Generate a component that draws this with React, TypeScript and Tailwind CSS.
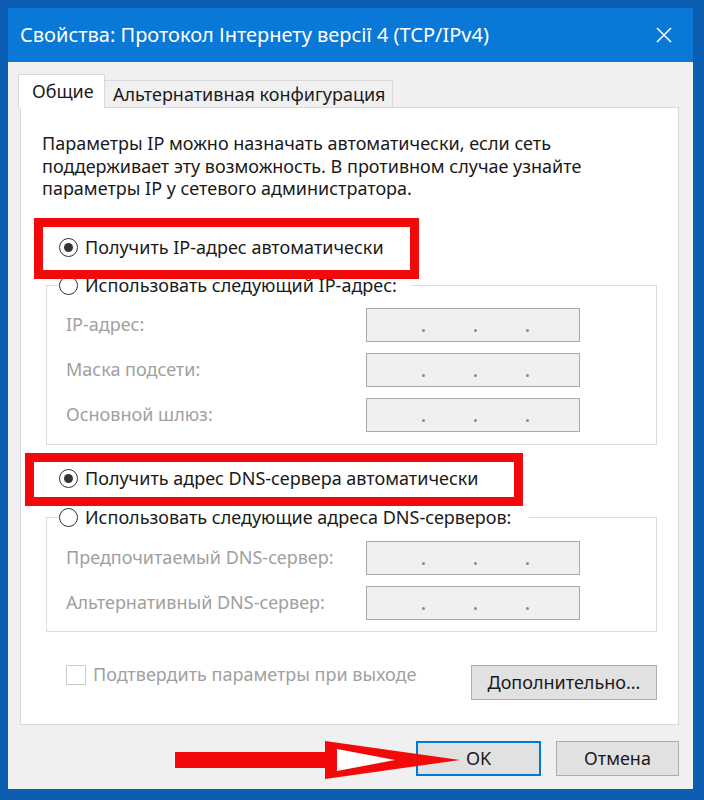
import React from 'react';

const Radio = ({ checked }: { checked?: boolean }) => (
  <span className="flex h-[19px] w-[19px] shrink-0 items-center justify-center rounded-full border border-[#333333] bg-white">
    {checked && <span className="h-[9px] w-[9px] rounded-full bg-[#333333]" />}
  </span>
);

const IpField = () => (
  <div className="flex h-[34px] w-[214px] items-start gap-[49px] border border-[#a9a9a9] bg-[#f0f0f0] pl-[55px] pt-[20px]">
    <span className="h-[3px] w-[3px] rounded-full bg-[#8a8a8a]" />
    <span className="h-[3px] w-[3px] rounded-full bg-[#8a8a8a]" />
    <span className="h-[3px] w-[3px] rounded-full bg-[#8a8a8a]" />
  </div>
);

const FieldRow = ({ label }: { label: string }) => (
  <div className="flex h-[34px] items-center">
    <span className="w-[300px] text-[#a0a0a0]">{label}</span>
    <IpField />
  </div>
);

export default function App() {
  return (
    <div className="relative h-[800px] w-[704px] bg-[#0b5db1] pb-[11px] pl-[8px] pr-[11px] pt-[8px] font-['Noto_Sans',sans-serif] text-[18px] text-[#1a1a1a]">
      <div className="flex h-full flex-col">
        {/* title bar */}
        <div className="flex h-[54px] items-center justify-between bg-[#0a78d7] pl-[12px] pr-[21px] text-[20px] text-white">
          <span>Свойства: Протокол Інтернету версії 4 (TCP/IPv4)</span>
          <svg width="16" height="16" viewBox="0 0 16 16">
            <path d="M1 1L15 15M15 1L1 15" stroke="white" strokeWidth="1.5" />
          </svg>
        </div>

        <div className="flex-1 bg-[#f0f0f0] pl-[12px] pr-[14px] pt-[12px]">
          {/* tabs */}
          <div className="flex h-[34px] items-end">
            <div className="relative z-10 -ml-[2px] flex h-[34px] w-[87px] items-center border border-b-0 border-[#d9d9d9] bg-white pl-[13px]">
              Общие
            </div>
            <div className="flex h-[28px] w-[288px] items-center border border-b-0 border-l-0 border-[#d9d9d9] bg-[#f0f0f0] pl-[8px]">
              Альтернативная конфигурация
            </div>
          </div>

          {/* panel */}
          <div className="relative -mt-px h-[618px] border border-[#d9d9d9] bg-white">
            <p className="ml-[21px] mt-[24px] leading-[22.5px]">
              Параметры IP можно назначать автоматически, если сеть
              <br />
              поддерживает эту возможность. В противном случае узнайте
              <br />
              параметры IP у сетевого администратора.
            </p>

            <div className="ml-[38px] mt-[36px] flex h-[24px] items-center gap-[7px]">
              <Radio checked />
              <span>Получить IP-адрес автоматически</span>
            </div>

            <fieldset className="ml-[25px] mt-[14px] w-[611px] border border-[#dcdcdc] pb-[12px] pl-[12px]">
              <legend className="flex h-[24px] items-center gap-[7px] pr-[14px]">
                <Radio />
                <span>Использовать следующий IP-адрес:</span>
              </legend>
              <div className="ml-[7px] mt-[10px] flex flex-col gap-[11px]">
                <FieldRow label="IP-адрес:" />
                <FieldRow label="Маска подсети:" />
                <FieldRow label="Основной шлюз:" />
              </div>
            </fieldset>

            <div className="ml-[38px] mt-[22px] flex h-[24px] items-center gap-[7px]">
              <Radio checked />
              <span>Получить адрес DNS-сервера автоматически</span>
            </div>

            <fieldset className="ml-[25px] mt-[15px] w-[611px] border border-[#dcdcdc] pb-[11px] pl-[12px]">
              <legend className="flex h-[24px] items-center gap-[7px] pr-[18px]">
                <Radio />
                <span>Использовать следующие адреса DNS-серверов:</span>
              </legend>
              <div className="ml-[7px] mt-[11px] flex flex-col gap-[11px]">
                <FieldRow label="Предпочитаемый DNS-сервер:" />
                <FieldRow label="Альтернативный DNS-сервер:" />
              </div>
            </fieldset>

            <div className="ml-[45px] mt-[33px] flex w-[591px] items-start justify-between">
              <div className="flex h-[20px] items-center gap-[7px]">
                <span className="h-[20px] w-[20px] border border-[#cccccc] bg-white" />
                <span className="text-[#a0a0a0]">Подтвердить параметры при выходе</span>
              </div>
              <button className="h-[35px] w-[186px] border border-[#adadad] bg-[#e1e1e1]">
                Дополнительно...
              </button>
            </div>

            {/* red highlight frames */}
            <div className="absolute left-[13px] top-[110px] h-[61px] w-[385px] border-[9px] border-[#f20a0a]" />
            <div className="absolute left-[4px] top-[345px] h-[53px] w-[498px] border-[9px] border-[#f20a0a]" />
          </div>

          {/* dialog buttons */}
          <div className="mt-[16px] flex justify-end gap-[15px]">
            <button className="h-[35px] w-[125px] border-2 border-[#0078d7] bg-[#e1e1e1]">OK</button>
            <button className="h-[35px] w-[123px] border border-[#adadad] bg-[#e1e1e1]">Отмена</button>
          </div>
        </div>
      </div>

      {/* red arrow pointing at OK */}
      <svg className="absolute left-[170px] top-[735px]" width="300" height="50" viewBox="0 0 300 50">
        <rect x="5" y="17" width="155" height="16" fill="#f20a0a" />
        <polygon points="155,6 290,25 155,44" fill="#f20a0a" />
        <polygon points="167,14 225,25 167,36" fill="white" />
      </svg>
    </div>
  );
}
